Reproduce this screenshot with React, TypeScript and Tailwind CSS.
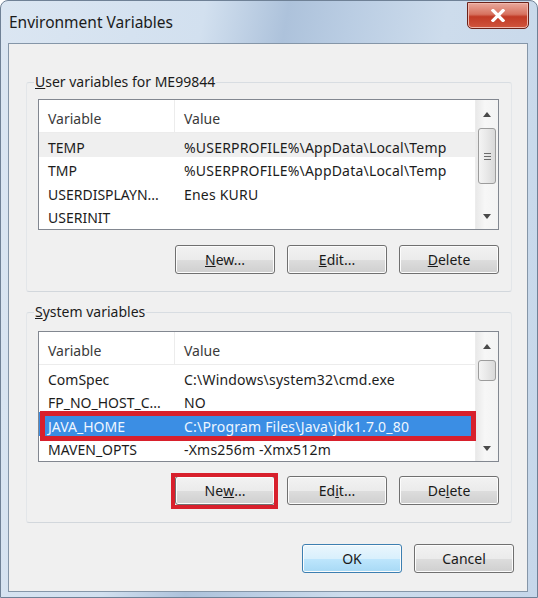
import React from "react";

type Row = { name: string; value: string; hover?: boolean; selected?: boolean };

const userRows: Row[] = [
  { name: "TEMP", value: "%USERPROFILE%\\AppData\\Local\\Temp", hover: true },
  { name: "TMP", value: "%USERPROFILE%\\AppData\\Local\\Temp" },
  { name: "USERDISPLAYN...", value: "Enes KURU" },
  { name: "USERINIT", value: "" },
];

const systemRows: Row[] = [
  { name: "ComSpec", value: "C:\\Windows\\system32\\cmd.exe" },
  { name: "FP_NO_HOST_C...", value: "NO" },
  { name: "JAVA_HOME", value: "C:\\Program Files\\Java\\jdk1.7.0_80", selected: true },
  { name: "MAVEN_OPTS", value: "-Xms256m -Xmx512m" },
];

function Arrow({ up }: { up?: boolean }) {
  return (
    <svg width="8" height="5" viewBox="0 0 8 5">
      {up ? <path d="M0 5 L4 0 L8 5 Z" fill="#4a4a4a" /> : <path d="M0 0 L4 5 L8 0 Z" fill="#4a4a4a" />}
    </svg>
  );
}

function ScrollBar({ thumbH, grip }: { thumbH: number; grip?: boolean }) {
  return (
    <div className="w-[23px] flex flex-col bg-[linear-gradient(90deg,#e9e9e9,#f7f7f7_40%,#f3f3f3)] border-l border-[#ececec]">
      <div className="h-[28px] flex items-center justify-center">
        <Arrow up />
      </div>
      <div className="flex-1 px-[2px]">
        <div
          className="rounded-[3px] border border-[#9c9c9c] bg-[linear-gradient(90deg,#f4f4f4,#e8e8e8_50%,#d9d9d9)] flex flex-col items-center justify-center gap-[2px]"
          style={{ height: thumbH }}
        >
          {grip && (
            <>
              <div className="w-[7px] h-[1px] bg-[#6b6b6b]" />
              <div className="w-[7px] h-[1px] bg-[#6b6b6b]" />
              <div className="w-[7px] h-[1px] bg-[#6b6b6b]" />
            </>
          )}
        </div>
      </div>
      <div className="h-[26px] flex items-center justify-center">
        <Arrow />
      </div>
    </div>
  );
}

function ListBox({ rows, thumbH, grip, mark }: { rows: Row[]; thumbH: number; grip?: boolean; mark?: boolean }) {
  return (
    <div className="relative h-[131px] border border-[#828790] bg-white flex">
      <div className="flex-1 flex flex-col overflow-hidden">
        <div className="h-[33px] shrink-0 flex border-b border-[#ececec] text-[#3a3a3a]">
          <div className="w-[136px] pl-[9px] pt-[4px] flex items-center border-r border-[#ececec]">Variable</div>
          <div className="flex-1 pl-[9px] pt-[4px] flex items-center">Value</div>
        </div>
        {rows.map((r) => (
          <div
            key={r.name}
            className={
              "h-[23.5px] shrink-0 flex items-center pt-[5px] " +
              (r.selected ? "bg-[#3b8ee4] text-[#eef6ff]" : r.hover ? "bg-[#efefef] text-[#1c1c1c]" : "text-[#1c1c1c]")
            }
          >
            <div className="w-[136px] pl-[9px] whitespace-nowrap">{r.name}</div>
            <div className="flex-1 pl-[9px] whitespace-nowrap tracking-[0.2px]">{r.value}</div>
          </div>
        ))}
      </div>
      <ScrollBar thumbH={thumbH} grip={grip} />
      {mark && <div className="absolute left-[1px] top-[79px] w-[436px] h-[30px] border-[5px] border-[#d8202c]" />}
    </div>
  );
}

function Btn({ children, mark, def }: { children: React.ReactNode; mark?: boolean; def?: boolean }) {
  return (
    <div className="relative">
      <div
        className={
          "w-[100px] h-[29px] rounded-[3px] border flex items-center justify-center text-[#1a1a1a] shadow-[inset_0_0_0_1px_#fcfcfc] " +
          (def
            ? "border-[#3c7fb1] bg-[linear-gradient(180deg,#eaf6fd_0%,#d9f0fc_50%,#bee6fd_51%,#a7d9f5_100%)]"
            : "border-[#707070] bg-[linear-gradient(180deg,#f2f2f2_0%,#ebebeb_50%,#dddddd_51%,#cfcfcf_100%)]")
        }
      >
        {children}
      </div>
      {mark && <div className="absolute left-[-4px] right-[-3px] top-[-3px] bottom-[-4px] border-[4px] border-[#d8202c]" />}
    </div>
  );
}

function Group({ label, children, className }: { label: React.ReactNode; children: React.ReactNode; className: string }) {
  return (
    <fieldset
      className={
        "ml-[17px] mr-[15px] border border-[#e3e6e9] border-b-[#d2d7dc] border-t-[#d8dde2] rounded-[3px] pl-[11px] pr-[12px] pb-[17px] " +
        className
      }
    >
      <legend className="ml-[-4px] px-[1px] h-[20px] leading-[20px] text-[#1c1c1c]">{label}</legend>
      {children}
    </fieldset>
  );
}

export default function App() {
  return (
    <div
      className="w-[538px] h-[598px] flex flex-col rounded-t-[8px] border border-[#6f8196] bg-[linear-gradient(100deg,#dbe6f2_0%,#d2e0ef_32%,#adc2db_45%,#bacde3_55%,#cddcec_70%,#c6d7ea_100%)] text-[14px]"
      style={{ fontFamily: '"Noto Sans", "Open Sans", sans-serif' }}
    >
      <div className="h-[42px] shrink-0 flex justify-between">
        <div className="pl-[8px] pt-[10px] text-[15.5px] text-[#1b1b1b] leading-[22px]">Environment Variables</div>
        <div className="mt-[1px] mr-[8px] w-[62px] h-[27px] rounded-b-[5px] border border-[#6b2219] bg-[linear-gradient(180deg,#e9a99d_0%,#d7725f_45%,#c13a25_55%,#d0553d_100%)] flex items-center justify-center shadow-[inset_0_0_0_1px_#f0b8ad]">
          <svg width="14" height="13" viewBox="0 0 14 13">
            <path d="M2 1.5 L12 11.5 M12 1.5 L2 11.5" stroke="#ffffff" strokeWidth="3.2" strokeLinecap="square" />
          </svg>
        </div>
      </div>
      <div className="ml-[7px] mr-[9px] mb-[5px] flex-1 border border-[#8596a8] bg-[#f0f0f0] flex flex-col">
        <Group label={<><u>U</u>ser variables for ME99844</>} className="mt-[28px]">
          <div className="mt-[7px]">
            <ListBox rows={userRows} thumbH={56} grip />
          </div>
          <div className="mt-[15px] flex justify-end gap-[12px]">
            <Btn><u>N</u>ew...</Btn>
            <Btn><u>E</u>dit...</Btn>
            <Btn><u>D</u>elete</Btn>
          </div>
        </Group>
        <Group label={<><u>S</u>ystem variables</>} className="mt-[10px]">
          <div className="mt-[9px]">
            <ListBox rows={systemRows} thumbH={21} mark />
          </div>
          <div className="mt-[14px] flex justify-end gap-[12px]">
            <Btn mark>Ne<u>w</u>...</Btn>
            <Btn>Ed<u>i</u>t...</Btn>
            <Btn>De<u>l</u>ete</Btn>
          </div>
        </Group>
        <div className="mt-[21px] mr-[13px] flex justify-end gap-[12px]">
          <Btn def>OK</Btn>
          <Btn>Cancel</Btn>
        </div>
      </div>
    </div>
  );
}
